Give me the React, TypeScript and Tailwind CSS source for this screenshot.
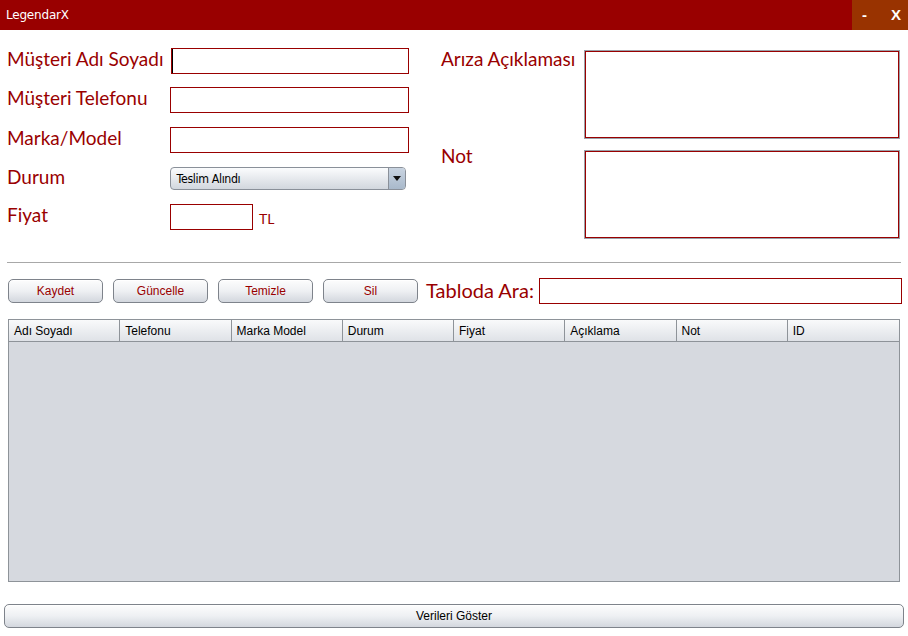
import { useState } from "react";

const label = "text-[#990000] text-[19px] leading-[24px] font-['Lato','Open_Sans',sans-serif]";
const field = "h-[26px] border border-[#990000] bg-white";
const btn =
  "h-[24px] rounded-[5px] border border-[#7e838b] bg-gradient-to-b from-[#fdfdfd] via-[#eef0f3] to-[#d3d7de] text-[12px] font-['Liberation_Sans',Arial,sans-serif] shadow-[inset_0_1px_0_#ffffff]";

const columns = ["Adı Soyadı", "Telefonu", "Marka Model", "Durum", "Fiyat", "Açıklama", "Not", "ID"];

function App() {
  const [status] = useState("Teslim Alındı");

  return (
    <div className="w-[908px] h-[636px] bg-white overflow-hidden font-['Liberation_Sans',Arial,sans-serif]">
      {/* title bar */}
      <div className="h-[30px] bg-[#990000] flex items-center justify-between">
        <span className="pl-[6px] text-white text-[12px] font-['DejaVu_Sans',sans-serif] tracking-[-0.2px]">LegendarX</span>
        <div className="h-full w-[56px] bg-[#993300] flex items-center text-white font-bold text-[15px] font-['Liberation_Sans',Arial,sans-serif]">
          <span className="ml-[10px]">-</span>
          <span className="ml-[24px]">X</span>
        </div>
      </div>

      {/* form */}
      <div className="flex">
        <div className="w-[420px] pl-[7px] pt-[18px]">
          <div className="flex items-center h-[26px]">
            <span className={`${label} w-[164px] mb-[4px]`}>Müşteri Adı Soyadı</span>
            <div className={`${field} w-[238px] relative`}>
              <span className="absolute left-0 top-0 w-[1px] h-full bg-black"></span>
            </div>
          </div>
          <div className="flex items-center h-[26px] mt-[13px]">
            <span className={`${label} w-[163px] mb-[4px]`}>Müşteri Telefonu</span>
            <div className={`${field} w-[239px]`}></div>
          </div>
          <div className="flex items-center h-[26px] mt-[14px]">
            <span className={`${label} w-[163px] mb-[4px]`}>Marka/Model</span>
            <div className={`${field} w-[239px]`}></div>
          </div>
          <div className="flex items-center h-[23px] mt-[14px]">
            <span className={`${label} w-[163px] mb-[4px]`}>Durum</span>
            <div className="w-[236px] h-[23px] rounded-[4px] border border-[#8a9099] bg-gradient-to-b from-[#fbfcfd] to-[#d2d7de] flex items-center justify-between overflow-hidden">
              <span className="pl-[6px] text-[12px] text-black font-['DejaVu_Sans',sans-serif] tracking-[-0.4px] scale-x-[0.92] origin-left">{status}</span>
              <div className="w-[17px] h-full bg-gradient-to-b from-[#c9d4e1] to-[#a9b9cb] border-l border-[#8a9099] flex items-center justify-center">
                <svg width="8" height="5" viewBox="0 0 8 5">
                  <path d="M0 0h8L4 5z" fill="#111" />
                </svg>
              </div>
            </div>
          </div>
          <div className="flex items-center h-[26px] mt-[14px]">
            <span className={`${label} w-[163px] mb-[4px]`}>Fiyat</span>
            <div className={`${field} w-[83px]`}></div>
            <span className="ml-[6px] mt-[3px] text-[#990000] text-[14px] font-['Lato',sans-serif]">TL</span>
          </div>
        </div>

        <div className="pl-[21px] pt-[20px]">
          <div className="flex items-start">
            <span className={`${label} w-[143px] -mt-[3px]`}>Arıza Açıklaması</span>
            <div className="w-[316px] h-[89px] border border-[#9aa0a8]">
              <div className="w-full h-full border border-[#990000] bg-white"></div>
            </div>
          </div>
          <div className="flex items-start mt-[11px]">
            <span className={`${label} w-[143px] -mt-[6px]`}>Not</span>
            <div className="w-[316px] h-[89px] border border-[#9aa0a8]">
              <div className="w-full h-full border border-[#990000] bg-white"></div>
            </div>
          </div>
        </div>
      </div>

      <div className="mx-[7px] mt-[23px] h-[1px] bg-[#a8a8a8]"></div>

      {/* actions */}
      <div className="flex items-center pl-[8px] mt-[15px] h-[26px]">
        <div className="flex gap-[10px]">
          <button className={`${btn} w-[95px] text-[#990000]`}>Kaydet</button>
          <button className={`${btn} w-[95px] text-[#990000]`}>Güncelle</button>
          <button className={`${btn} w-[95px] text-[#990000]`}>Temizle</button>
          <button className={`${btn} w-[95px] text-[#990000]`}>Sil</button>
        </div>
        <span className={`${label} ml-[8px] w-[113px] text-[20px] mb-[3px]`}>Tabloda Ara:</span>
        <div className={`${field} w-[363px]`}></div>
      </div>

      {/* table */}
      <div className="ml-[8px] mt-[15px] w-[892px] h-[263px] border border-[#8e9399] bg-[#d6d9df] flex flex-col">
        <div className="grid grid-cols-8 h-[22px] bg-gradient-to-b from-[#f9fafb] to-[#dfe2e7] border-b border-[#8e9399]">
          {columns.map((c, i) => (
            <div
              key={c}
              className={`flex items-center pl-[5px] text-[12px] text-black ${i < columns.length - 1 ? "border-r border-[#8e9399]" : ""}`}
            >
              {c}
            </div>
          ))}
        </div>
        <div className="flex-1"></div>
      </div>

      <div className="ml-[4px] mt-[21px]">
        <button className={`${btn} w-[900px] text-black`}>Verileri Göster</button>
      </div>
    </div>
  );
}

export default App;
